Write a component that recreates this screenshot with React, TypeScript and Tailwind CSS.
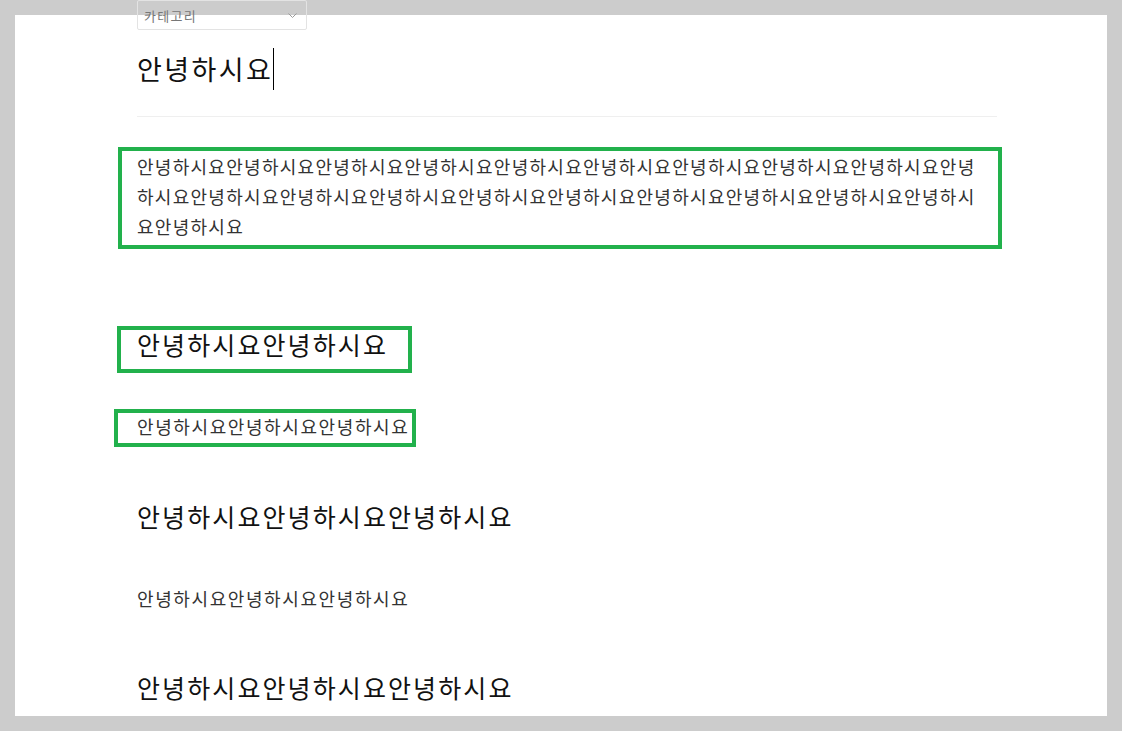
// 에디터 미리보기: 카테고리 선택 + 제목 + 본문 블록들 (초록 박스는 표시용 주석)
const FONT = `font-["Noto_Sans_CJK_KR","Noto_Sans",sans-serif]`;

const hello = (n: number) => "안녕하시요".repeat(n);

function GreenBox({ className }: { className: string }) {
  return (
    <div
      className={`pointer-events-none absolute border-[4px] border-[#22b14c] ${className}`}
    />
  );
}

export default function App() {
  return (
    <div
      className={`${FONT} h-[731px] overflow-hidden bg-[#cccccc] p-[15px] tracking-[0.08em]`}
    >
      <div className="h-full bg-white">
        <div className="ml-[122px] flex w-[860px] flex-col">
          {/* 카테고리 셀렉트 */}
          <div className="-mt-[15px] flex h-[30px] w-[170px] items-center justify-between rounded-[2px] border border-[#e3e3e3] pl-[6px] pr-[9px]">
            <span className="text-[13px] leading-none text-[#777777]">
              카테고리
            </span>
            <svg
              width="9"
              height="5"
              viewBox="0 0 9 5"
              fill="none"
              stroke="#9a9a9a"
              strokeWidth="1"
            >
              <path d="M0.5 0.5 L4.5 4.5 L8.5 0.5" />
            </svg>
          </div>

          {/* 제목 입력 */}
          <div className="mt-[18px] flex h-[42px] items-center text-[27px] leading-[42px] tracking-[2.4px] text-[#111111]">
            <span>안녕하시요</span>
            <span className="inline-block h-[42px] w-px bg-black" />
          </div>

          <div className="mt-[26px] h-px bg-[#efefef]" />

          {/* 본문 */}
          <div className="relative mt-[34px]">
            <p className="w-[850px] break-all text-[18px] leading-[30px] text-[#333333]">
              {hello(20)}
            </p>
            <GreenBox className="-left-[19px] -top-[4px] h-[102px] w-[884px]" />
          </div>

          <div className="relative mt-[85px]">
            <h2 className="text-[25px] leading-[36px] tracking-[2.1px] text-[#111111]">
              {hello(2)}
            </h2>
            <GreenBox className="-left-[20px] top-0 h-[47px] w-[295px]" />
          </div>

          <div className="relative mt-[49px]">
            <p className="text-[18px] leading-[30px] tracking-[1.6px] text-[#333333]">
              {hello(3)}
            </p>
            <GreenBox className="-left-[23px] -top-[2px] h-[38px] w-[302px]" />
          </div>

          <h3 className="mt-[57px] text-[25px] leading-[36px] tracking-[2.1px] text-[#111111]">
            {hello(3)}
          </h3>

          <p className="mt-[49px] text-[18px] leading-[30px] tracking-[1.6px] text-[#333333]">
            {hello(3)}
          </p>

          <h3 className="mt-[56px] text-[25px] leading-[36px] tracking-[2.1px] text-[#111111]">
            {hello(3)}
          </h3>
        </div>
      </div>
    </div>
  );
}
